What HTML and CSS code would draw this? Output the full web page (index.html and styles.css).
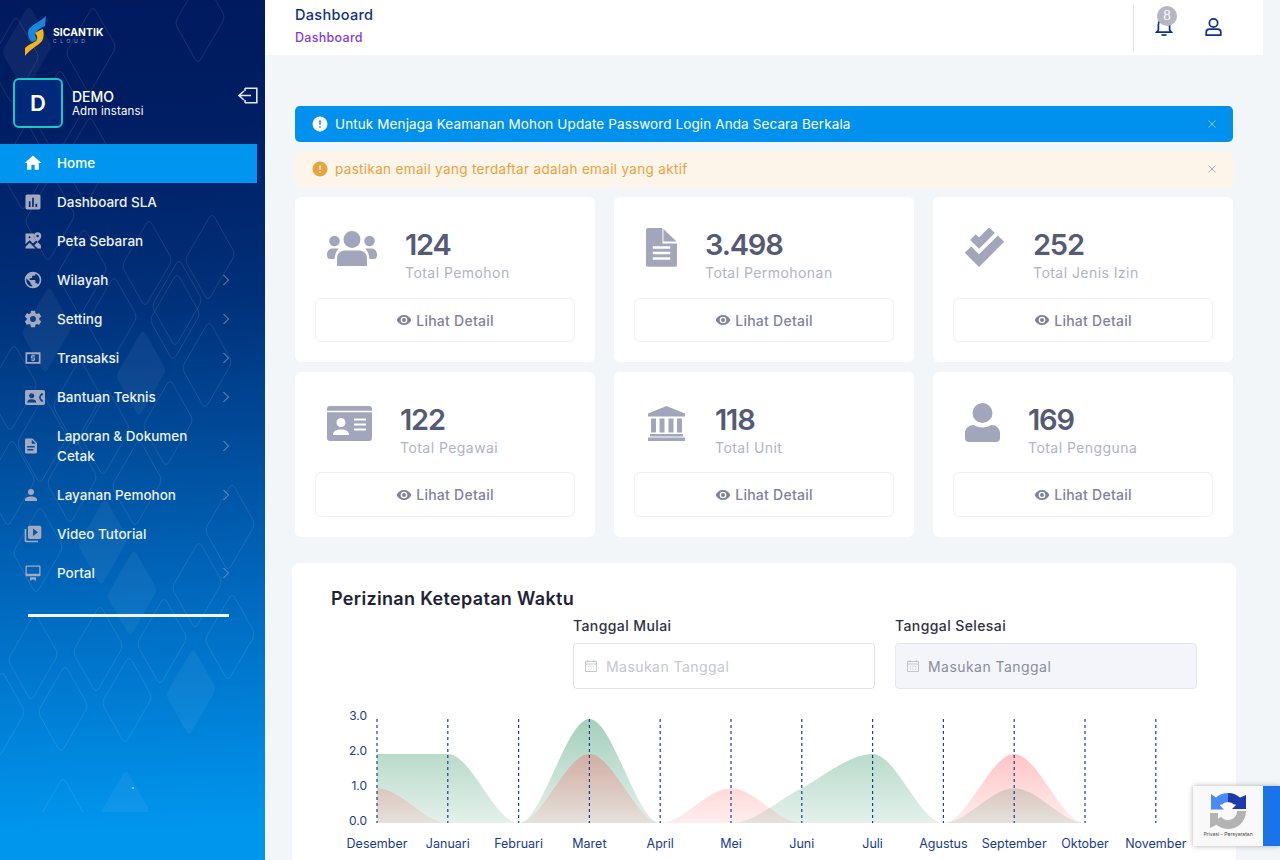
FILE: index.html
```html
<!DOCTYPE html>
<html lang="id">
<head>
<meta charset="utf-8">
<title>Dashboard</title>
<link rel="stylesheet" href="styles.css">
</head>
<body>
<div class="app">
  <aside class="sidebar">
    <svg class="pattern" width="265" height="860" viewBox="0 0 265 860" aria-hidden="true">
      <defs>
        <path id="dia" d="M-1,-39 Q2,-44 5,-39 L23,-7 Q25,-3 23,1 L1,39 Q-2,44 -5,39 L-23,7 Q-25,3 -23,-1 Z"/>
        <clipPath id="pclip"><rect x="0" y="0" width="254" height="812"/></clipPath>
      </defs>
      <g clip-path="url(#pclip)">
        <g class="pat-line">
          <use href="#dia" x="91" y="50"/><use href="#dia" x="58" y="113"/><use href="#dia" x="88" y="160"/><use href="#dia" x="25" y="167"/><use href="#dia" x="50" y="218"/>
          <use href="#dia" x="147" y="263"/><use href="#dia" x="210" y="257"/><use href="#dia" x="82" y="272"/><use href="#dia" x="177" y="303"/><use href="#dia" x="14" y="60"/>
          <use href="#dia" x="175" y="317"/><use href="#dia" x="207" y="365"/><use href="#dia" x="112" y="320"/><use href="#dia" x="12" y="388"/><use href="#dia" x="78" y="403"/>
          <use href="#dia" x="42" y="440"/><use href="#dia" x="105" y="432"/><use href="#dia" x="168" y="423"/><use href="#dia" x="137" y="483"/><use href="#dia" x="72" y="480"/>
          <use href="#dia" x="10" y="483"/><use href="#dia" x="230" y="527"/><use href="#dia" x="38" y="550"/><use href="#dia" x="197" y="585"/><use href="#dia" x="230" y="637"/>
          <use href="#dia" x="33" y="657"/><use href="#dia" x="98" y="649"/><use href="#dia" x="162" y="641"/><use href="#dia" x="63" y="709"/><use href="#dia" x="127" y="700"/>
          <use href="#dia" x="0" y="715"/><use href="#dia" x="61" y="821"/><use href="#dia" x="200" y="20"/>
        </g>
        <g class="pat-fill">
          <use href="#dia" x="27" y="49"/><use href="#dia" x="47" y="330"/><use href="#dia" x="141" y="373"/><use href="#dia" x="103" y="542"/><use href="#dia" x="132" y="593"/>
          <use href="#dia" x="191" y="692"/><use href="#dia" x="124" y="813"/>
        </g>
      </g>
      <rect class="spark" x="132" y="787" width="2" height="2"/>
    </svg>

    <div class="brand">
      <svg class="brand-mark" width="22" height="41" viewBox="25 14 22 41" aria-hidden="true">
        <path fill="#1689dc" d="M46 14 L45 24 C40 26 36 29 35 33 L37 38 L32 40 C28 36 27 31 29 27 C33 22 41 19 46 14Z"/>
        <path fill="#f7b31b" d="M43 27 C44 31 44 36 42 39 C38 44 30 47 25 54 L25 46 C29 42 34 41 37 38 C38 35 36 32 35 31 C38 29 40 28 43 27 Z"/>
      </svg>
      <div class="brand-text">
        <span class="brand-name">SICANTIK</span>
        <span class="brand-sub">CLOUD</span>
      </div>
    </div>

    <div class="profile">
      <div class="avatar">D</div>
      <div class="who">
        <span class="who-name">DEMO</span>
        <span class="who-role">Adm instansi</span>
      </div>
      <svg class="logout" width="21" height="17" viewBox="0 0 21 17" aria-hidden="true">
        <path d="M8 1.2H19.8V15.8H8M8 1.2V4M8 15.8V13M14 8.5H2.5M7 4L2 8.5L7 13"/>
      </svg>
    </div>

    <nav class="menu">
      <a class="item active"><svg class="mi" viewBox="0 0 24 24"><path d="M10,20V14H14V20H19V12H22L12,3L2,12H5V20H10Z"/></svg><span class="lbl">Home</span></a>
      <a class="item"><svg class="mi" viewBox="0 0 24 24"><path d="M19 3H5C3.9 3 3 3.9 3 5V19C3 20.1 3.9 21 5 21H19C20.1 21 21 20.1 21 19V5C21 3.9 20.1 3 19 3M9 18H7V11H9V18M13 18H11V7H13V18M17 18H15V14H17V18Z"/></svg><span class="lbl">Dashboard SLA</span></a>
      <a class="item"><svg class="mi" viewBox="0 0 24 24"><path fill-rule="evenodd" d="M3 3H13.200C12.500 5.500 13.500 8 16 11.500L12 15L8 11L3 16ZM7.800 6L6.300 7.500L7.800 9L9.300 7.500ZM3 21V19L8 14L15 21ZM17.500 21L13.500 17L17.500 13.200L21.500 17V21ZM17.500 1.500C20 1.500 22 3.500 22 6C22 8.500 19.500 11 17.500 13C15.500 11 13 8.500 13 6C13 3.500 15 1.500 17.500 1.500ZM17.500 4.500A1.500 1.500 0 1 0 17.500 7.500A1.500 1.500 0 1 0 17.500 4.500Z"/></svg><span class="lbl">Peta Sebaran</span></a>
      <a class="item"><svg class="mi" viewBox="0 0 24 24"><path d="M17.9,17.39C17.64,16.59 16.89,16 16,16H15V13A1,1 0 0,0 14,12H8V10H10A1,1 0 0,0 11,9V7H13A2,2 0 0,0 15,5V4.59C17.93,5.77 20,8.64 20,12C20,14.08 19.2,15.97 17.9,17.39M11,19.93C7.05,19.44 4,16.08 4,12C4,11.38 4.08,10.78 4.21,10.21L9,15V16A2,2 0 0,0 11,18M12,2A10,10 0 0,0 2,12A10,10 0 0,0 12,22A10,10 0 0,0 22,12A10,10 0 0,0 12,2Z"/></svg><span class="lbl">Wilayah</span><svg class="chev" viewBox="0 0 8 12"><path d="M1.5 1L6.5 6L1.5 11"/></svg></a>
      <a class="item"><svg class="mi" viewBox="0 0 24 24"><path d="M12,15.5A3.5,3.5 0 0,1 8.5,12A3.5,3.5 0 0,1 12,8.5A3.5,3.5 0 0,1 15.5,12A3.5,3.5 0 0,1 12,15.5M19.43,12.97C19.47,12.65 19.5,12.33 19.5,12C19.5,11.67 19.47,11.34 19.43,11L21.54,9.37C21.73,9.22 21.78,8.95 21.66,8.73L19.66,5.27C19.54,5.05 19.27,4.96 19.05,5.05L16.56,6.05C16.04,5.66 15.5,5.32 14.87,5.07L14.5,2.42C14.46,2.18 14.25,2 14,2H10C9.75,2 9.54,2.18 9.5,2.42L9.13,5.07C8.5,5.32 7.96,5.66 7.44,6.05L4.95,5.05C4.73,4.96 4.46,5.05 4.34,5.27L2.34,8.73C2.21,8.95 2.27,9.22 2.46,9.37L4.57,11C4.53,11.34 4.5,11.67 4.5,12C4.5,12.33 4.53,12.65 4.57,12.97L2.46,14.63C2.27,14.78 2.21,15.05 2.34,15.27L4.34,18.73C4.46,18.95 4.73,19.03 4.95,18.95L7.44,17.94C7.96,18.34 8.5,18.68 9.13,18.93L9.5,21.58C9.54,21.82 9.75,22 10,22H14C14.25,22 14.46,21.82 14.5,21.58L14.87,18.93C15.5,18.67 16.04,18.34 16.56,17.94L19.05,18.95C19.27,19.03 19.54,18.95 19.66,18.73L21.66,15.27C21.78,15.05 21.73,14.78 21.54,14.63L19.43,12.97Z"/></svg><span class="lbl">Setting</span><svg class="chev" viewBox="0 0 8 12"><path d="M1.5 1L6.5 6L1.5 11"/></svg></a>
      <a class="item"><svg class="mi" viewBox="0 0 24 24"><path fill-rule="evenodd" d="M3 5H21V19H3ZM5 7.500V16.800H19V7.500ZM14.500 8.800V10.200H11.200V11.300H14.500V15H13V16H11V15H9.500V13.700H13V12.500H9.500V9H11V8H13V8.800Z"/></svg><span class="lbl">Transaksi</span><svg class="chev" viewBox="0 0 8 12"><path d="M1.5 1L6.5 6L1.5 11"/></svg></a>
      <a class="item"><svg class="mi mi-wide" viewBox="0 0 24 20"><path fill-rule="evenodd" d="M2 1H22A2 2 0 0 1 24 3V17A2 2 0 0 1 22 19H2A2 2 0 0 1 0 17V3A2 2 0 0 1 2 1ZM8 5A3 3 0 1 0 8 11A3 3 0 1 0 8 5ZM2.5 16H13.5C13.5 13.5 11 12.2 8 12.2C5 12.2 2.5 13.5 2.5 16ZM22 5.5L20 4.5C18 6.5 17 8.5 17 10C17 11.5 18 13.5 20 15.5L22 14.5L20.5 12H19.2C19 11 19 9 19.2 8H20.5Z"/></svg><span class="lbl">Bantuan Teknis</span><svg class="chev" viewBox="0 0 8 12"><path d="M1.5 1L6.5 6L1.5 11"/></svg></a>
      <a class="item"><svg class="mi mi-sm" viewBox="0 0 24 24"><path d="M13,9H18.5L13,3.5V9M6,2H14L20,8V20A2,2 0 0,1 18,22H6C4.89,22 4,21.1 4,20V4C4,2.89 4.89,2 6,2M15,18V16H7V18H15M17,14V12H7V14H17Z"/></svg><span class="lbl">Laporan &amp; Dokumen Cetak</span><svg class="chev" viewBox="0 0 8 12"><path d="M1.5 1L6.5 6L1.5 11"/></svg></a>
      <a class="item"><svg class="mi mi-sm" viewBox="0 0 24 24"><path d="M12,4A4,4 0 0,1 16,8A4,4 0 0,1 12,12A4,4 0 0,1 8,8A4,4 0 0,1 12,4M12,14C16.42,14 20,15.79 20,18V20H4V18C4,15.79 7.58,14 12,14Z"/></svg><span class="lbl">Layanan Pemohon</span><svg class="chev" viewBox="0 0 8 12"><path d="M1.5 1L6.5 6L1.5 11"/></svg></a>
      <a class="item"><svg class="mi" viewBox="0 0 24 24"><path d="M4,6H2V20A2,2 0 0,0 4,22H18V20H4V6M20,2H8A2,2 0 0,0 6,4V16A2,2 0 0,0 8,18H20A2,2 0 0,0 22,16V4A2,2 0 0,0 20,2M12,14.5V5.5L18,10L12,14.5Z"/></svg><span class="lbl">Video Tutorial</span></a>
      <a class="item"><svg class="mi" viewBox="0 0 24 24"><path fill-rule="evenodd" d="M4 3H20A1 1 0 0 1 21 4V15A1 1 0 0 1 20 16H4A1 1 0 0 1 3 15V4A1 1 0 0 1 4 3ZM4.500 4.500V13H19.500V4.500ZM8.500 17H15.500V21.500L12 19.500L8.500 21.500Z"/></svg><span class="lbl">Portal</span><svg class="chev" viewBox="0 0 8 12"><path d="M1.5 1L6.5 6L1.5 11"/></svg></a>
    </nav>
    <div class="side-rule"></div>
  </aside>

  <main class="main">
    <header class="topbar">
      <div class="crumbs">
        <span class="crumb-title">Dashboard</span>
        <span class="crumb-sub">Dashboard</span>
      </div>
      <div class="top-actions">
        <div class="bell">
          <svg width="18" height="20" viewBox="0 0 18 20" aria-hidden="true"><path d="M1.5 15.2H16.5L14.6 13V7.5C14.6 4.4 12.1 1.9 9 1.9C5.9 1.9 3.4 4.4 3.4 7.5V13Z"/><path d="M6.5 18H11.5"/></svg>
          <span class="badge">8</span>
        </div>
        <svg class="usr" width="17" height="20" viewBox="0 0 18 20" aria-hidden="true"><circle cx="9" cy="5.8" r="4.4"/><path d="M1.3 18.6V15.3C1.3 13.3 3.3 12.3 5 12.3H13C14.7 12.3 16.7 13.3 16.7 15.3V18.6Z"/></svg>
      </div>
    </header>

    <section class="content">
      <div class="alert alert-info">
        <svg class="al-ic" viewBox="0 0 24 24"><path d="M13,13H11V7H13M13,17H11V15H13M12,2A10,10 0 0,0 2,12A10,10 0 0,0 12,22A10,10 0 0,0 22,12A10,10 0 0,0 12,2Z"/></svg>
        <span class="al-text">Untuk Menjaga Keamanan Mohon Update Password Login Anda Secara Berkala</span>
        <svg class="al-x" viewBox="0 0 8 8"><path d="M.5 .5L7.5 7.5M7.5 .5L.5 7.5"/></svg>
      </div>
      <div class="alert alert-warn">
        <svg class="al-ic" viewBox="0 0 24 24"><path d="M13,13H11V7H13M13,17H11V15H13M12,2A10,10 0 0,0 2,12A10,10 0 0,0 12,22A10,10 0 0,0 22,12A10,10 0 0,0 12,2Z"/></svg>
        <span class="al-text">pastikan email yang terdaftar adalah email yang aktif</span>
        <svg class="al-x" viewBox="0 0 8 8"><path d="M.5 .5L7.5 7.5M7.5 .5L.5 7.5"/></svg>
      </div>

      <div class="stats">
        <article class="stat">
          <div class="stat-top">
            <svg class="si" width="50" height="35" viewBox="0 0 50 35"><circle cx="25" cy="8.5" r="8.5"/><circle cx="7.5" cy="10" r="5.3"/><circle cx="42.5" cy="10" r="5.3"/><path d="M10 35V28C10 22 14 19.5 18 19.5H32C36 19.5 40 22 40 28V35Z"/><path d="M0 24C0 19 3 17.5 6 17.5H12C10.5 19 8 21.5 7.5 28H3C1 28 0 26.5 0 24Z"/><path d="M50 24C50 19 47 17.5 44 17.5H38C39.500 19 42 21.500 42.500 28H47C49 28 50 26.500 50 24Z"/></svg>
            <div><div class="num">124</div><div class="cap">Total Pemohon</div></div>
          </div>
          <a class="detail"><svg viewBox="0 0 24 24"><path d="M12,9A3,3 0 0,0 9,12A3,3 0 0,0 12,15A3,3 0 0,0 15,12A3,3 0 0,0 12,9M12,17A5,5 0 0,1 7,12A5,5 0 0,1 12,7A5,5 0 0,1 17,12A5,5 0 0,1 12,17M12,4.5C7,4.5 2.73,7.61 1,12C2.73,16.39 7,19.5 12,19.5C17,19.5 21.27,16.39 23,12C21.27,7.61 17,4.5 12,4.5Z"/></svg>Lihat Detail</a>
        </article>
        <article class="stat">
          <div class="stat-top">
            <svg class="si si-up" width="31" height="40" viewBox="4 2 16 20.600" preserveAspectRatio="none"><path d="M13,9H19.800L13,2.500V9M5,2H12.500V10H20V21A1,1 0 0,1 19,22H5C4.500,22 4,21.500 4,21V3C4,2.500 4.500,2 5,2M16.500,18.300V17H7.500V18.300H16.500M16.500,15.500V14.200H7.500V15.500H16.500M16.500,12.700V11.400H7.500V12.700H16.500Z"/></svg>
            <div><div class="num">3.498</div><div class="cap">Total Permohonan</div></div>
          </div>
          <a class="detail"><svg viewBox="0 0 24 24"><path d="M12,9A3,3 0 0,0 9,12A3,3 0 0,0 12,15A3,3 0 0,0 15,12A3,3 0 0,0 12,9M12,17A5,5 0 0,1 7,12A5,5 0 0,1 12,7A5,5 0 0,1 17,12A5,5 0 0,1 12,17M12,4.5C7,4.5 2.73,7.61 1,12C2.73,16.39 7,19.5 12,19.5C17,19.5 21.27,16.39 23,12C21.27,7.61 17,4.5 12,4.5Z"/></svg>Lihat Detail</a>
        </article>
        <article class="stat">
          <div class="stat-top">
            <svg class="si si-up" width="40" height="40" viewBox="0 0 40 40"><path class="si-stroke" d="M3 21.600L14 32.600L36 10.600"/><path class="si-stroke si-thin" d="M8 9.200L14 15.200L27 2.200"/></svg>
            <div><div class="num">252</div><div class="cap">Total Jenis Izin</div></div>
          </div>
          <a class="detail"><svg viewBox="0 0 24 24"><path d="M12,9A3,3 0 0,0 9,12A3,3 0 0,0 12,15A3,3 0 0,0 15,12A3,3 0 0,0 12,9M12,17A5,5 0 0,1 7,12A5,5 0 0,1 12,7A5,5 0 0,1 17,12A5,5 0 0,1 12,17M12,4.5C7,4.5 2.73,7.61 1,12C2.73,16.39 7,19.5 12,19.5C17,19.5 21.27,16.39 23,12C21.27,7.61 17,4.5 12,4.5Z"/></svg>Lihat Detail</a>
        </article>
        <article class="stat">
          <div class="stat-top">
            <svg class="si" width="45" height="35" viewBox="0 0 45 35"><path fill-rule="evenodd" d="M3 0H42A3 3 0 0 1 45 3V4.800H0V3A3 3 0 0 1 3 0ZM0 6.300H45V32A3 3 0 0 1 42 35H3A3 3 0 0 1 0 32ZM14 12A4.500 4.500 0 1 0 14 21A4.500 4.500 0 1 0 14 12ZM6 29H22C22 25 18.500 23.500 14 23.500C9.500 23.500 6 25 6 29ZM27 12.500V14.500H39V12.500ZM27 17.500V19.500H39V17.500ZM27 22.500V24.500H39V22.500Z"/></svg>
            <div><div class="num">122</div><div class="cap">Total Pegawai</div></div>
          </div>
          <a class="detail"><svg viewBox="0 0 24 24"><path d="M12,9A3,3 0 0,0 9,12A3,3 0 0,0 12,15A3,3 0 0,0 15,12A3,3 0 0,0 12,9M12,17A5,5 0 0,1 7,12A5,5 0 0,1 12,7A5,5 0 0,1 17,12A5,5 0 0,1 12,17M12,4.5C7,4.5 2.73,7.61 1,12C2.73,16.39 7,19.5 12,19.5C17,19.5 21.27,16.39 23,12C21.27,7.61 17,4.5 12,4.5Z"/></svg>Lihat Detail</a>
        </article>
        <article class="stat">
          <div class="stat-top stat-top-unit">
            <svg class="si" width="37" height="35" viewBox="0 0 37 35"><path d="M18.500 0L37 7.500V10.500H0V7.500Z"/><path d="M3 12.500H8V26.500H3ZM11.500 12.500H16.500V26.500H11.500ZM20.500 12.500H25.500V26.500H20.500ZM29 12.500H34V26.500H29Z"/><path d="M2 28H35V30.500H2ZM0 31.500H37V35H0Z"/></svg>
            <div><div class="num">118</div><div class="cap">Total Unit</div></div>
          </div>
          <a class="detail"><svg viewBox="0 0 24 24"><path d="M12,9A3,3 0 0,0 9,12A3,3 0 0,0 12,15A3,3 0 0,0 15,12A3,3 0 0,0 12,9M12,17A5,5 0 0,1 7,12A5,5 0 0,1 12,7A5,5 0 0,1 17,12A5,5 0 0,1 12,17M12,4.5C7,4.5 2.73,7.61 1,12C2.73,16.39 7,19.5 12,19.5C17,19.5 21.27,16.39 23,12C21.27,7.61 17,4.5 12,4.5Z"/></svg>Lihat Detail</a>
        </article>
        <article class="stat">
          <div class="stat-top">
            <svg class="si si-up" width="35" height="39" viewBox="0 0 35 39"><circle cx="17.500" cy="10" r="10"/><path d="M0 35V30C0 25 4 22 9 22C11 23.500 14 24.500 17.500 24.500C21 24.500 24 23.500 26 22C31 22 35 25 35 30V35C35 37.500 33.500 39 31 39H4C1.500 39 0 37.500 0 35Z"/></svg>
            <div><div class="num">169</div><div class="cap">Total Pengguna</div></div>
          </div>
          <a class="detail"><svg viewBox="0 0 24 24"><path d="M12,9A3,3 0 0,0 9,12A3,3 0 0,0 12,15A3,3 0 0,0 15,12A3,3 0 0,0 12,9M12,17A5,5 0 0,1 7,12A5,5 0 0,1 12,7A5,5 0 0,1 17,12A5,5 0 0,1 12,17M12,4.5C7,4.5 2.73,7.61 1,12C2.73,16.39 7,19.5 12,19.5C17,19.5 21.27,16.39 23,12C21.27,7.61 17,4.5 12,4.5Z"/></svg>Lihat Detail</a>
        </article>
      </div>

      <div class="panel">
        <h2 class="panel-title">Perizinan Ketepatan Waktu</h2>
        <div class="filters">
          <label class="field">
            <span class="field-label">Tanggal Mulai</span>
            <span class="input">
              <svg viewBox="0 0 14 14"><path d="M1.500 2.500H12.500V12.500H1.500ZM1.500 5H12.500M4 1V3M10 1V3"/><path d="M4 7.500H5M6.500 7.500H7.500M9 7.500H10M4 10H5M6.500 10H7.500M9 10H10"/></svg>
              Masukan Tanggal
            </span>
          </label>
          <label class="field">
            <span class="field-label">Tanggal Selesai</span>
            <span class="input input-off">
              <svg viewBox="0 0 14 14"><path d="M1.500 2.500H12.500V12.500H1.500ZM1.500 5H12.500M4 1V3M10 1V3"/><path d="M4 7.500H5M6.500 7.500H7.500M9 7.500H10M4 10H5M6.500 10H7.500M9 10H10"/></svg>
              Masukan Tanggal
            </span>
          </label>
        </div>
        <svg class="chart" width="900" height="160" viewBox="336 700 900 160" role="img">
          <defs>
            <linearGradient id="gGreen" gradientUnits="userSpaceOnUse" x1="0" y1="719" x2="0" y2="823">
              <stop offset="0" stop-color="#49a078" stop-opacity=".5"/>
              <stop offset="1" stop-color="#49a078" stop-opacity=".15"/>
            </linearGradient>
            <linearGradient id="gRed" gradientUnits="userSpaceOnUse" x1="0" y1="719" x2="0" y2="823">
              <stop offset="0" stop-color="#ff5c5c" stop-opacity=".5"/>
              <stop offset="1" stop-color="#ff6b6b" stop-opacity=".12"/>
            </linearGradient>
          </defs>
          <path fill="url(#gGreen)" d="M377 823 L377 754 L447.800 754 C471.400 754 495 823 518.600 823 C542.200 823 565.800 719 589.400 719 C613 719 636.600 823 660.200 823 L731 823 C754.600 823 778.200 799.900 801.800 788.300 C817 780.700 849 754 872.600 754 C896.200 754 919.800 823 943.400 823 C967 823 990.600 788.300 1014.200 788.300 C1037.800 788.300 1061.400 823 1085 823 Z"/>
          <path fill="url(#gRed)" d="M377 823 L377 788.300 C400.600 788.300 424.200 823 447.800 823 L518.600 823 C542.200 823 565.800 754 589.400 754 C613 754 636.600 823 660.200 823 C683.800 823 707.400 788.300 731 788.300 C754.600 788.300 778.200 823 801.800 823 L943.400 823 C967 823 990.600 754 1014.200 754 C1037.800 754 1061.400 823 1085 823 Z"/>
          <path class="grid" d="M377 719V823M447.800 719V823M518.600 719V823M589.400 719V823M660.200 719V823M731 719V823M801.800 719V823M872.600 719V823M943.400 719V823M1014.200 719V823M1085 719V823M1155.800 719V823"/>
          <g class="ticks-y">
            <text x="367" y="720">3.0</text><text x="367" y="755">2.0</text><text x="367" y="790">1.0</text><text x="367" y="825">0.0</text>
          </g>
          <g class="ticks-x">
            <text x="377" y="848">Desember</text><text x="447.800" y="848">Januari</text><text x="518.600" y="848">Februari</text><text x="589.400" y="848">Maret</text><text x="660.200" y="848">April</text><text x="731" y="848">Mei</text><text x="801.800" y="848">Juni</text><text x="872.600" y="848">Juli</text><text x="943.400" y="848">Agustus</text><text x="1014.200" y="848">September</text><text x="1085" y="848">Oktober</text><text x="1155.800" y="848">November</text>
          </g>
        </svg>
      </div>
    </section>
  </main>
</div>

<div class="recaptcha">
  <div class="rc-box">
    <svg width="38" height="38" viewBox="0 0 38 38" aria-hidden="true">
      <path class="rc-arc" stroke="#b3b3b3" d="M32.500 19A13.500 13.500 0 0 1 8.500 27.500"/>
      <path fill="#b3b3b3" d="M1 21H9V26L13 30L1 36Z"/>
      <path class="rc-arc" stroke="#4a8af4" d="M19 5.500A13.500 13.500 0 0 0 9.500 9.500"/>
      <path fill="#4a8af4" d="M2 2V17.500H15L11 13.500C12 12 13 11.500 14 11L9 7Z"/>
      <path class="rc-arc" stroke="#1c3aa9" d="M19 5.500A13.500 13.500 0 0 1 28.500 9.500"/>
      <path fill="#1c3aa9" d="M37 3V17H23L27 13L24 10.500L30 6Z"/>
    </svg>
    <span class="rc-text">Privasi - Persyaratan</span>
  </div>
  <div class="rc-tab"></div>
</div>
</body>
</html>
```

FILE: styles.css
```css
* { box-sizing: border-box; }
html, body { margin: 0; height: 860px; overflow: hidden; }
body { font-family: Inter, "Noto Sans", sans-serif; background: #f3f6f9; color: #1e2238; }
a { display: flex; text-decoration: none; }

.app { display: flex; height: 860px; }

/* sidebar */
.sidebar {
  position: relative;
  width: 265px;
  flex: none;
  height: 860px;
  overflow: hidden;
  background: linear-gradient(178deg, #001a5e 0%, #001e64 15%, #003079 35%, #006abf 70%, #0096ee 96%);
}
.pattern { position: absolute; left: 0; top: 0; }
.pat-line use { fill: none; stroke: rgba(255, 255, 255, .1); stroke-width: 1; }
.pat-fill use { fill: rgba(255, 255, 255, .05); }
.spark { fill: #7cc8f5; }
.brand, .profile, .menu, .side-rule { position: relative; }

.brand { display: flex; align-items: center; gap: 6px; height: 78px; padding: 1px 0 6px 25px; }
.brand-text { display: flex; flex-direction: column; margin-top: -2px; }
.brand-name { font-size: 10.3px; line-height: 12px; font-weight: 700; color: #fff; letter-spacing: .1px; }
.brand-sub { font-size: 5px; line-height: 7px; color: #8ea0c8; letter-spacing: 3.6px; }

.profile { display: flex; align-items: center; height: 50px; padding-left: 13px; }
.avatar {
  width: 50px; height: 50px;
  display: flex; align-items: center; justify-content: center;
  background: #00297a;
  border: 2px solid #1ac7c7;
  border-radius: 6px;
  color: #fff;
  font-size: 22px;
  font-weight: 600;
}
.who { display: flex; flex-direction: column; margin-left: 9px; color: #fff; flex: 1; margin-top: 2px; }
.who-name { font-size: 14px; line-height: 15px; font-weight: 500; }
.who-role { font-size: 11.500px; line-height: 15px; letter-spacing: .15px; }
.logout { fill: none; stroke: #e6e9f2; stroke-width: 1.6; margin: -15px 7px 0 0; }

.menu { margin-top: 16px; width: 257px; }
.item {
  align-items: center;
  gap: 14px;
  padding: 9px 27px 10px 23px;
  color: #edf1f8;
  font-size: 13.500px;
  line-height: 20px;
  font-weight: 500;
}
.item.active { background: #0096f0; color: #fff; }
.item.active .mi { fill: #fff; }
.mi { width: 20px; height: 20px; flex: none; fill: #a2a9c0; }
.mi-wide { width: 20px; height: 17px; margin-left: 2px; margin-right: -2px; }
.mi-sm { width: 18px; height: 18px; margin-left: -1px; margin-right: 3px; }
.lbl { flex: 1; }
.chev { width: 8px; height: 12px; fill: none; stroke: #8b9bbd; stroke-width: 1; flex: none; }
.side-rule { height: 3px; width: 201px; margin: 21px 0 0 28px; background: #f3f4f6; }

/* main */
.main { flex: 1; min-width: 0; }
.topbar {
  display: flex;
  justify-content: space-between;
  height: 55px;
  margin-right: 17px;
  padding: 5px 0 4px 30px;
  background: #fff;
}
.crumbs { display: flex; flex-direction: column; }
.crumb-title { font-size: 14.500px; line-height: 20px; font-weight: 500; color: #0f2f7f; letter-spacing: .3px; }
.crumb-sub { font-size: 12.500px; line-height: 20px; margin-top: 3px; color: #7c3aed; font-weight: 500; letter-spacing: .3px; }
.top-actions {
  display: flex;
  align-items: center;
  width: 130px;
  height: 46px;
  padding: 0 0 3px 21px;
  gap: 32px;
  border-left: 1px solid #dfe1e6;
}
.bell { position: relative; width: 18px; height: 20px; }
.bell svg { fill: none; stroke: #0b318f; stroke-width: 1.7; display: block; }
.badge {
  position: absolute; left: 2px; top: -11px;
  width: 20px; height: 20px;
  display: flex; align-items: center; justify-content: center;
  border-radius: 50%;
  background: #b5b5c3;
  color: #fff;
  font-family: "Liberation Serif", serif;
  font-size: 15px;
}
.usr { fill: none; stroke: #0b318f; stroke-width: 1.8; }

.content { padding: 51px 47px 0 30px; }
.alert {
  display: flex;
  align-items: center;
  padding: 0 16px 0 16px;
  border-radius: 5px;
  font-size: 13.500px;
}
.alert-info { height: 36px; background: #0090ee; color: #fff; padding-bottom: 1px; letter-spacing: .11px; }
.alert-warn { height: 35px; margin-top: 10px; background: #fdf4ea; color: #e8a33d; padding-bottom: 2px; letter-spacing: .33px; }
.al-ic { width: 18px; height: 18px; fill: currentColor; flex: none; margin-right: 6px; }
.al-text { flex: 1; }
.al-x { width: 8px; height: 8px; fill: none; stroke: #a8a8b5; stroke-width: 1; margin-right: 1px; }
.alert-info .al-x { stroke: #8fc4ee; }

.stats { display: grid; grid-template-columns: repeat(3, 300px); gap: 10px 19px; margin-top: 10px; }
.stat { height: 165px; padding: 29px 20px 20px 20px; background: #fff; border-radius: 6px; }
.stat-top { display: flex; align-items: flex-start; gap: 28px; height: 72px; padding: 5px 0 0 12px; }
.stat-top > div { margin-top: -4px; }
.si { fill: #a2a6ba; flex: none; }
.si-up { margin-top: -3px; }
.si-stroke { fill: none; stroke: #a2a6ba; stroke-width: 9; }
.si-thin { stroke-width: 8; }
.stat-top-unit { padding-left: 14px; gap: 30px; }
.num { font-size: 29px; line-height: 36px; font-weight: 600; color: #555a75; letter-spacing: -1.2px; }
.cap { font-size: 14px; line-height: 20px; color: #b0b3c6; letter-spacing: .45px; }
.detail {
  align-items: center;
  justify-content: center;
  gap: 4px;
  height: 44px;
  border: 1px solid #eef0f4;
  border-radius: 6px;
  font-size: 14px;
  font-weight: 500;
  color: #7e829b;
  letter-spacing: .25px;
}
.stat:nth-child(n+4) .detail { height: 45px; margin-top: -1px; }
.detail svg { width: 16px; height: 16px; fill: #7e829b; }

.panel {
  margin: 26px -3px 0;
  height: 340px;
  padding: 23px 0 0 39px;
  background: #fff;
  border-radius: 8px;
}
.panel-title { margin: 0; font-size: 18px; line-height: 26px; font-weight: 600; color: #1e2238; letter-spacing: .33px; }
.filters { display: flex; gap: 20px; margin: 4px 0 0 242px; }
.field { width: 302px; display: block; }
.field-label { display: block; font-size: 14px; line-height: 20px; font-weight: 500; color: #2f3243; margin-bottom: 7px; letter-spacing: .4px; }
.input {
  display: flex;
  align-items: center;
  gap: 8px;
  height: 46px;
  padding-left: 10px;
  border: 1px solid #dfe1e7;
  border-radius: 4px;
  font-size: 14px;
  color: #c4c6d0;
  letter-spacing: .45px;
}
.input svg { width: 14px; height: 14px; fill: none; stroke: #b5b7c3; stroke-width: .8; }
.input-off { background: #f3f5fa; border-color: #e6e8ee; color: #8a8d9a; }
.chart { display: block; margin: 11px 0 0 5px; overflow: visible; }
.grid { fill: none; stroke: #1c3f8f; stroke-width: 1.200; stroke-dasharray: 3 3; }
.ticks-y text { text-anchor: end; font-size: 12px; fill: #1a3a8a; }
.ticks-x text { text-anchor: middle; font-size: 12.500px; fill: #1a3a8a; }

/* recaptcha */
.recaptcha {
  position: fixed; left: 1193px; top: 786px;
  display: flex;
  width: 87px; height: 60px;
  border-radius: 2px 0 0 2px;
  box-shadow: 0 0 5px rgba(120, 120, 120, .6);
}
.rc-box {
  width: 70px;
  display: flex; flex-direction: column; align-items: center;
  padding-top: 6px;
  background: #f9f9f9;
}
.rc-box svg { flex: none; }
.rc-arc { fill: none; stroke-width: 9; }
.rc-text { font-size: 5px; line-height: 7px; color: #444; white-space: nowrap; margin-top: 1px; }
.rc-tab { flex: 1; background: #1a73e8; }
```
